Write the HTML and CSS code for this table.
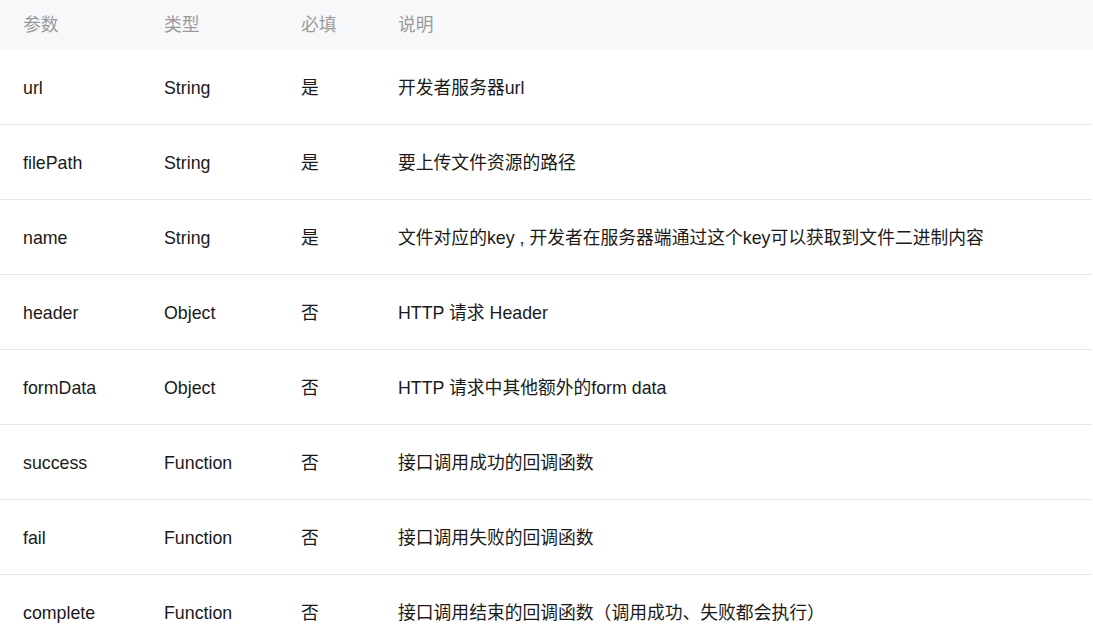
FILE: index.html
```html
<!DOCTYPE html>
<html lang="zh">
<head>
<meta charset="utf-8">
<link rel="stylesheet" href="styles.css">
</head>
<body>
<div class="table">
  <div class="row head">
    <div>参数</div><div>类型</div><div>必填</div><div>说明</div>
  </div>
  <div class="row">
    <div>url</div><div>String</div><div>是</div><div>开发者服务器url</div>
  </div>
  <div class="row">
    <div>filePath</div><div>String</div><div>是</div><div>要上传文件资源的路径</div>
  </div>
  <div class="row">
    <div>name</div><div>String</div><div>是</div><div>文件对应的key , 开发者在服务器端通过这个key可以获取到文件二进制内容</div>
  </div>
  <div class="row">
    <div>header</div><div>Object</div><div>否</div><div>HTTP 请求 Header</div>
  </div>
  <div class="row">
    <div>formData</div><div>Object</div><div>否</div><div>HTTP 请求中其他额外的form data</div>
  </div>
  <div class="row">
    <div>success</div><div>Function</div><div>否</div><div>接口调用成功的回调函数</div>
  </div>
  <div class="row">
    <div>fail</div><div>Function</div><div>否</div><div>接口调用失败的回调函数</div>
  </div>
  <div class="row">
    <div>complete</div><div>Function</div><div>否</div><div>接口调用结束的回调函数（调用成功、失败都会执行）</div>
  </div>
</div>
</body>
</html>
```
FILE: styles.css
```css
html, body {
  margin: 0;
  padding: 0;
  background: #ffffff;
}
body {
  font-family: "Liberation Sans", "Noto Sans CJK SC", sans-serif;
  font-size: 17.8px;
  line-height: 24px;
  color: #1a1a1a;
  overflow: hidden;
}
.table {
  width: 1092px;
}
.row {
  display: grid;
  grid-template-columns: 141px 137px 97px 1fr;
  align-items: center;
  padding-left: 23px;
  padding-top: 2px;
  height: 75px;
  border-bottom: 1px solid #e6e6e6;
  box-sizing: border-box;
}
.row.head {
  height: 50px;
  padding-top: 0;
  background: #f7f8fa;
  color: #9b9b9b;
  border-bottom: none;
  width: 1093px;
}
.row > div {
  white-space: nowrap;
}
```
